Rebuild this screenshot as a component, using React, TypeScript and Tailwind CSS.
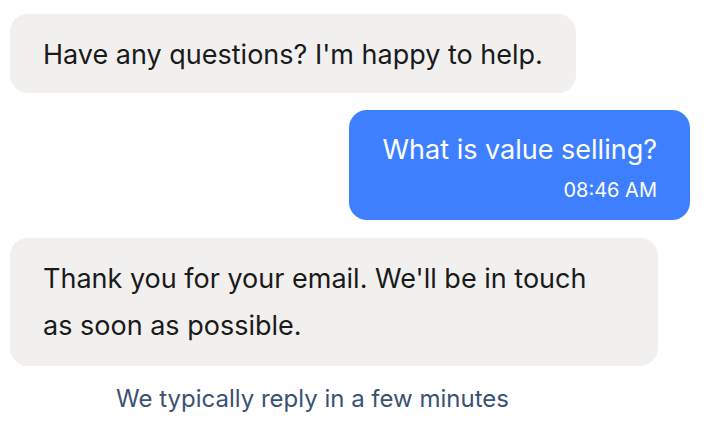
export default function App() {
  return (
    <div
      className="w-[708px] h-[440px] bg-white pt-[14px] pl-[10px] pr-[18px] flex flex-col"
      style={{ fontFamily: "Inter, 'Noto Sans', sans-serif" }}
    >
      <div className="self-start bg-[#f1f0ef] rounded-[18px] px-[33px] pt-[16.5px] pb-[15.5px] text-[27px] leading-[47px] text-[#1a1a1a]">
        Have any questions? I'm happy to help.
      </div>
      <div className="self-end mt-[17px] bg-[#3e7fff] rounded-[18px] pl-[33px] pr-[33px] pt-[16px] pb-[16px] text-white flex flex-col items-end">
        <div className="text-[27px] leading-[47px]">What is value selling?</div>
        <div className="text-[20px] leading-[28px] mt-[3px]">08:46 AM</div>
      </div>
      <div className="self-start mt-[18px] w-[648px] bg-[#f1f0ef] rounded-[18px] pl-[33px] pr-[42px] pt-[16.5px] pb-[17px] text-[27px] leading-[47px] text-[#1a1a1a]">
        Thank you for your email. We'll be in touch as soon as possible.
      </div>
      <div className="mt-[17px] ml-[106px] text-[24px] leading-[32px] text-[#3b5274]">
        We typically reply in a few minutes
      </div>
    </div>
  );
}
